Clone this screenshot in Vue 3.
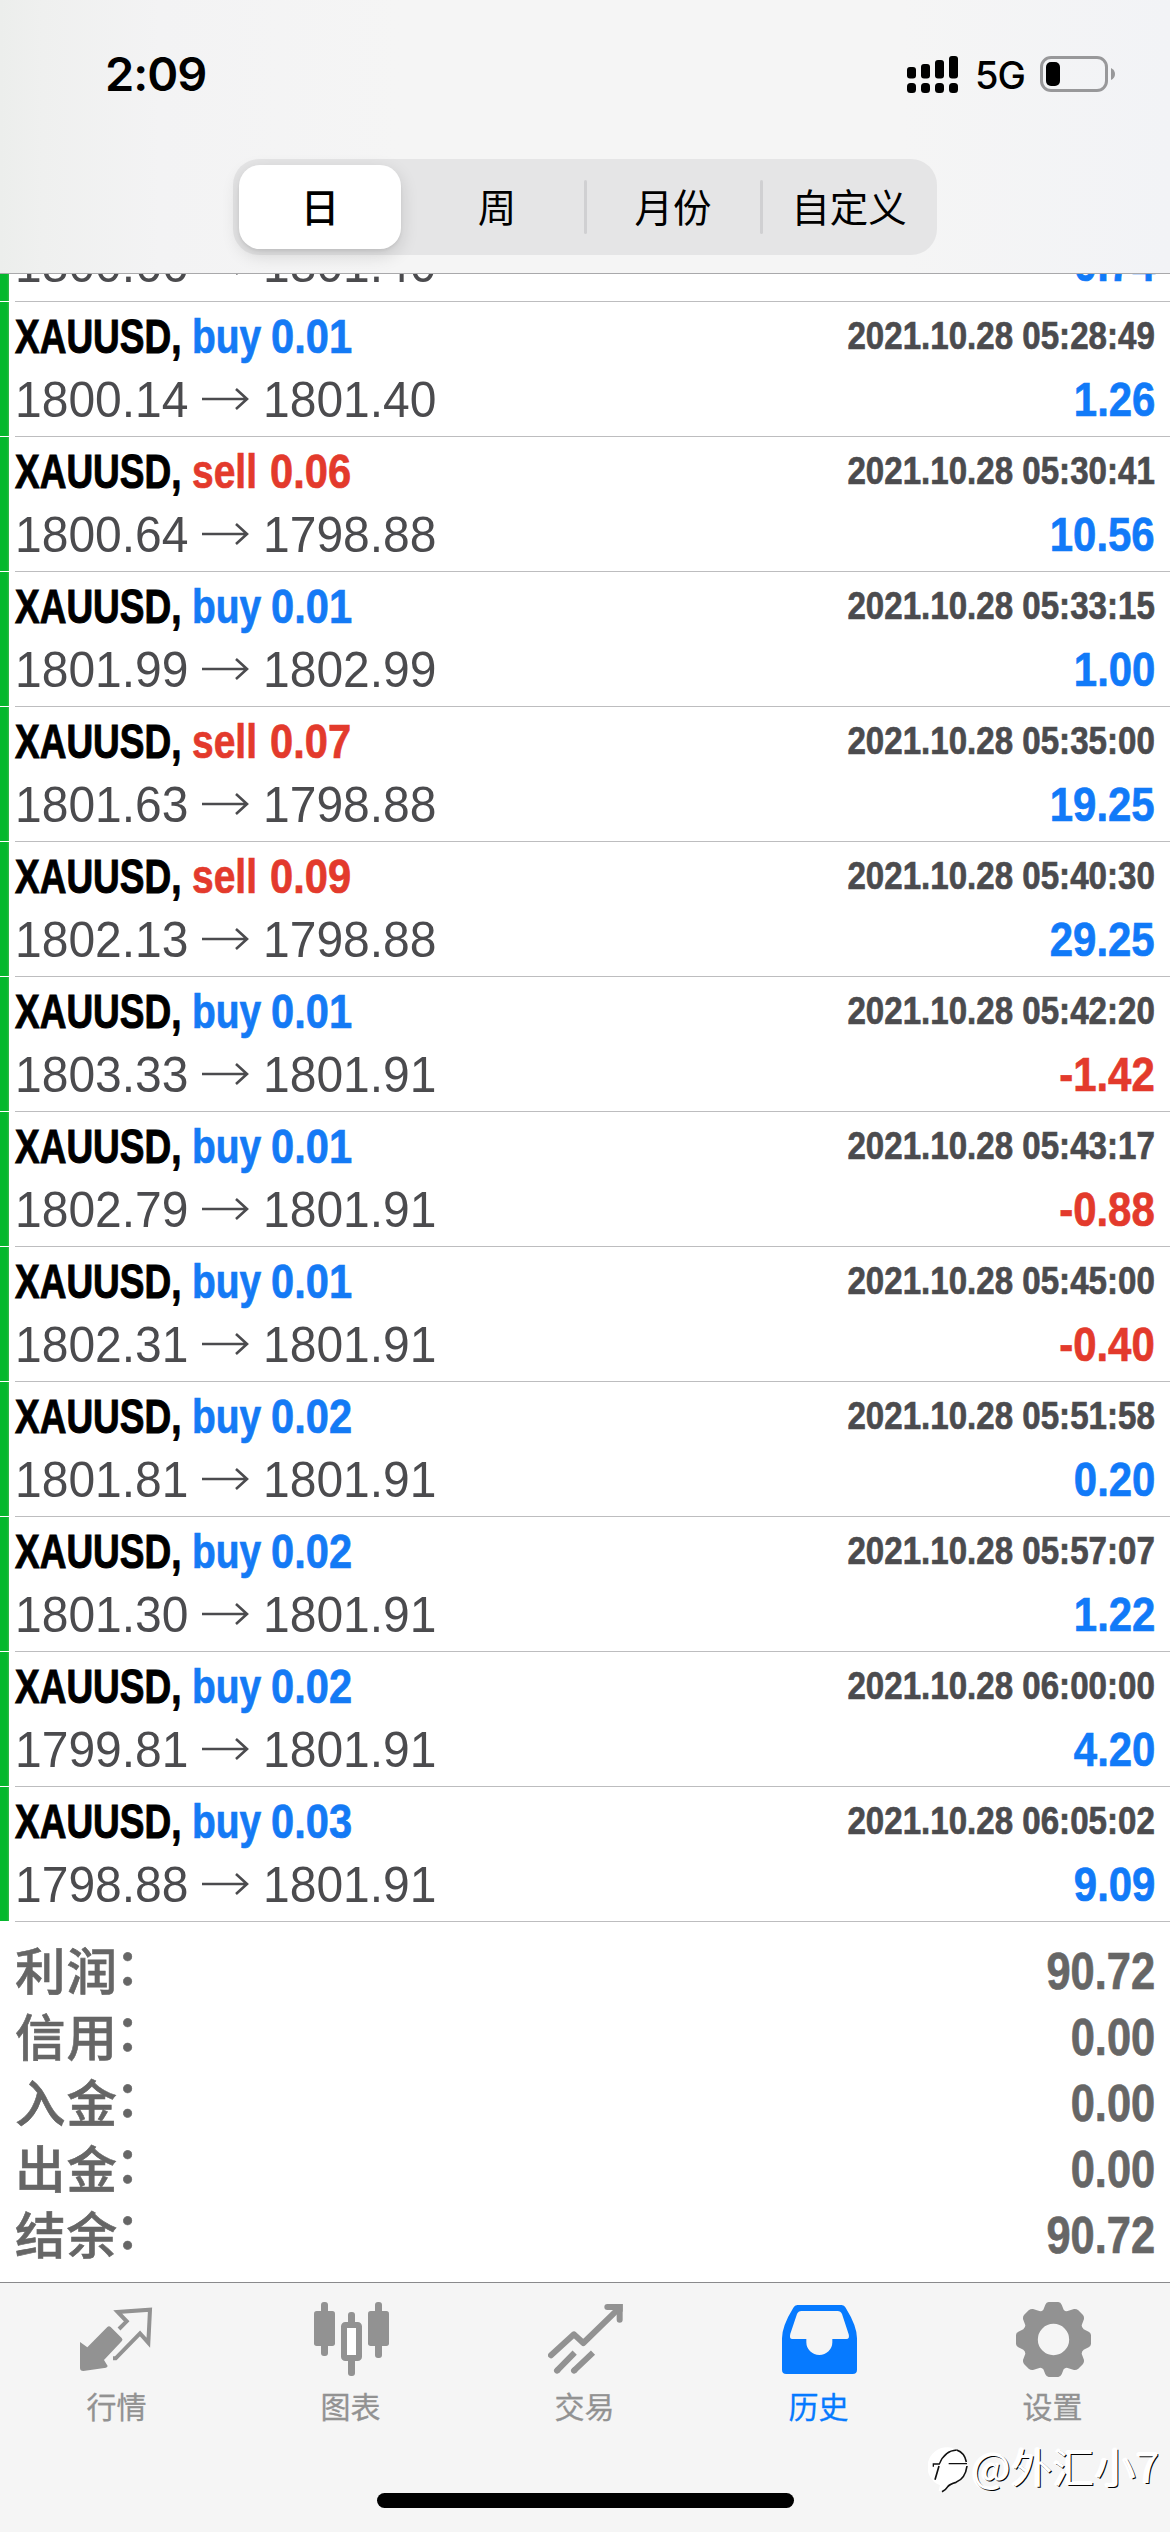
<script setup>
const deals = [
  ['buy', '0.01', '2021.10.28 05:27:15', '1800.66', '1801.40', '0.74'],
  ['buy', '0.01', '2021.10.28 05:28:49', '1800.14', '1801.40', '1.26'],
  ['sell', '0.06', '2021.10.28 05:30:41', '1800.64', '1798.88', '10.56'],
  ['buy', '0.01', '2021.10.28 05:33:15', '1801.99', '1802.99', '1.00'],
  ['sell', '0.07', '2021.10.28 05:35:00', '1801.63', '1798.88', '19.25'],
  ['sell', '0.09', '2021.10.28 05:40:30', '1802.13', '1798.88', '29.25'],
  ['buy', '0.01', '2021.10.28 05:42:20', '1803.33', '1801.91', '-1.42'],
  ['buy', '0.01', '2021.10.28 05:43:17', '1802.79', '1801.91', '-0.88'],
  ['buy', '0.01', '2021.10.28 05:45:00', '1802.31', '1801.91', '-0.40'],
  ['buy', '0.02', '2021.10.28 05:51:58', '1801.81', '1801.91', '0.20'],
  ['buy', '0.02', '2021.10.28 05:57:07', '1801.30', '1801.91', '1.22'],
  ['buy', '0.02', '2021.10.28 06:00:00', '1799.81', '1801.91', '4.20'],
  ['buy', '0.03', '2021.10.28 06:05:02', '1798.88', '1801.91', '9.09'],
].map(([side, lot, time, open, close, profit], i) => ({ side, lot, time, open, close, profit, scrolled: i === 0 }))

const totals = [
  ['利润', '90.72'],
  ['信用', '0.00'],
  ['入金', '0.00'],
  ['出金', '0.00'],
  ['结余', '90.72'],
]
const periods = ['日', '周', '月份', '自定义']
</script>

<template>
  <div class="screen">
    <header class="top">
      <div class="status">
        <span class="clock">2:09</span>
        <div class="status-right">
          <svg class="signal" width="51" height="37" viewBox="0 0 51 37">
            <rect x="0" y="11" width="9" height="11.5" rx="3" />
            <rect x="14" y="8" width="9" height="14.5" rx="3" />
            <rect x="28" y="4" width="9" height="18.5" rx="3" />
            <rect x="42" y="0" width="9" height="22.5" rx="3" />
            <rect v-for="i in 4" :key="i" :x="(i - 1) * 14" y="27" width="9" height="10" rx="3.5" />
          </svg>
          <span class="net">5G</span>
          <svg class="battery" width="76" height="36" viewBox="0 0 76 36">
            <rect x="1.5" y="1.5" width="65" height="33" rx="9.5" fill="none" stroke="#98989a" stroke-width="3" />
            <rect x="6" y="6" width="14" height="24" rx="5" />
            <path d="M71 12q4 2 4 6t-4 6z" fill="#98989a" />
          </svg>
        </div>
      </div>
      <div class="segments">
        <div v-for="(p, i) in periods" :key="p" class="segment" :class="{ on: i === 0, line: i > 1 }">
          <span>{{ p }}</span>
        </div>
      </div>
    </header>

    <main class="content">
      <div class="deals">
        <div v-for="d in deals" :key="d.time" class="deal" :class="{ scrolled: d.scrolled }">
          <div class="bar"></div>
          <div class="body">
            <div v-if="!d.scrolled" class="row title">
              <span class="cond symbol">XAUUSD,</span>
              <span class="cond side" :class="d.side">{{ d.side }}</span>
              <span class="cond lot" :class="d.side">{{ d.lot }}</span>
              <span class="cond time">{{ d.time }}</span>
            </div>
            <div class="row prices">
              <span class="price">{{ d.open }}</span>
              <svg class="arrow" width="48" height="24" viewBox="0 0 48 24">
                <path d="M1 12H46M35 2L46 12L35 22" fill="none" stroke="currentColor" stroke-width="2.600" />
              </svg>
              <span class="price">{{ d.close }}</span>
              <span class="cond profit" :class="{ loss: d.profit[0] === '-' }">{{ d.profit }}</span>
            </div>
          </div>
        </div>
      </div>
      <div class="totals">
        <div v-for="t in totals" :key="t[0]" class="total">
          <span class="label">{{ t[0] }}<span class="colon">：</span></span>
          <span class="cond amount">{{ t[1] }}</span>
        </div>
      </div>
    </main>

    <footer class="tabs">
      <nav class="tab-row">
        <div class="tab">
          <svg viewBox="0 0 225 225">
            <path d="M0 120L22 136L82 75Q87 70 92 75L125 108Q130 113 125 118L72 174L83 192Q82 196 78 197L10 207Q0 207 0 198Z" />
            <path d="M117 81L140 58L113 30L210 23L205 122L180 94L107 169H99" fill="none" stroke="currentColor" stroke-width="12" />
          </svg>
          <span>行情</span>
        </div>
        <div class="tab">
          <svg viewBox="0 0 225 225">
            <rect x="21" y="0" width="21" height="162" rx="9" />
            <rect x="0" y="27" width="63" height="105" rx="8" />
            <rect x="183" y="0" width="21" height="168" rx="9" />
            <rect x="162" y="27" width="63" height="105" rx="8" />
            <rect x="102" y="30" width="21" height="50" rx="9" />
            <rect x="102" y="165" width="21" height="57" rx="9" />
            <rect x="90" y="69" width="45" height="99" rx="4" fill="#fff" stroke="currentColor" stroke-width="18" />
          </svg>
          <span>图表</span>
        </div>
        <div class="tab">
          <svg viewBox="0 0 225 225">
            <g fill="none" stroke="currentColor" stroke-width="18" stroke-linecap="round">
              <path d="M9 160L78 97L106 123L212 20" stroke-linejoin="round" />
              <path d="M27 206L80 152M78 206L135 152" stroke-linecap="butt" />
              <path d="M27 206L28 205M78 206L79 205" />
              <path d="M178 15H215V53" />
            </g>
            <path d="M200 6H224V30Z" />
          </svg>
          <span>交易</span>
        </div>
        <div class="tab active">
          <svg viewBox="0 0 225 225">
            <path fill-rule="evenodd" d="M46 9H179Q187 9 191 17Q225 72 225 109V203Q225 216 212 216H13Q0 216 0 203V109Q0 72 34 17Q38 9 46 9ZM58 27Q49 27 45 36L25 95Q21 111 31 111H73V121A39 38 0 0 0 151 121V111H193Q204 111 200 97L180 36Q176 27 167 27Z" />
          </svg>
          <span>历史</span>
        </div>
        <div class="tab">
          <svg viewBox="0 0 225 225">
            <path fill-rule="evenodd" d="M98 0H127Q134 1 137 8L143 23Q148 29 155 27L174 21Q181 20 187 25L201 39Q205 44 204 51L197 70Q197 77 203 82L218 89Q224 92 225 99V126Q224 133 218 136L203 143Q197 148 197 155L204 174Q205 181 201 186L187 200Q181 205 174 204L155 198Q148 196 143 202L137 217Q134 224 127 225H98Q91 224 88 217L82 202Q77 196 70 198L51 204Q44 205 38 200L24 186Q20 181 21 174L28 155Q28 148 22 143L7 136Q1 133 0 126V99Q1 92 7 89L22 82Q28 77 28 70L21 51Q20 44 24 39L38 25Q44 20 51 21L70 27Q77 29 82 23L88 8Q91 1 98 0ZM112.500 65.500A47 47 0 1 0 112.500 159.500A47 47 0 1 0 112.500 65.500Z" />
          </svg>
          <span>设置</span>
        </div>
      </nav>
      <div class="home"></div>
      <div class="watermark">
        <svg width="42" height="50" viewBox="0 0 126 150">
          <path d="M58 4A59 59 0 0 1 117 62Q114 100 84 112Q62 122 44 138L32 134L36 118A59 59 0 0 1 58 4Z" fill="#fff" />
          <g fill="none" stroke="#111">
            <path d="M16 62V54H34Q50 14 86 12M62 53H117" stroke-width="4" />
            <path d="M33 60L21 101M86 12Q110 20 115 48M117 60Q112 98 84 109Q66 114 60 121Q54 131 42 137" stroke-width="5" />
          </g>
        </svg>
        <span>@外汇小7</span>
      </div>
    </footer>
  </div>
</template>

<style>
body {
  margin: 0;
  background: #fff;
}
</style>

<style scoped>
.screen {
  width: 1170px;
  height: 2532px;
  display: flex;
  flex-direction: column;
  overflow: hidden;
  position: relative;
  background: #fff;
  font-family: "Liberation Sans", "Noto Sans CJK SC", sans-serif;
  font-kerning: none;
}
.top {
  height: 273px;
  flex: none;
  border-bottom: 1px solid #a9a9ab;
  background: linear-gradient(90deg, #eceeec 0, #eff0ef 42px, #f3f3f4 160px, #f5f5f5 400px, #f5f5f5 900px, #f2f3f6 1170px);
}
.status {
  height: 159px;
  display: flex;
  justify-content: space-between;
  padding: 0 54px 0 105px;
}
.clock {
  font: 600 47px/60px Inter, sans-serif;
  letter-spacing: -1px;
  margin-top: 44px;
}
.status-right {
  display: flex;
  align-items: flex-start;
  padding-top: 56px;
}
.net {
  font: 500 38px/46px Inter, sans-serif;
  width: 65px;
  margin: -4px 0 0 17px;
  letter-spacing: -1px;
}
.segments {
  width: 704px;
  height: 96px;
  margin: 0 auto;
  display: flex;
  border-radius: 26px;
  background: #e5e5e6;
}
.segment {
  flex: 1;
  display: flex;
  align-items: center;
  justify-content: center;
  font: 400 38.5px/60px "Noto Sans CJK SC", sans-serif;
  padding-bottom: 5px;
  position: relative;
}
.segment.line::before {
  content: "";
  position: absolute;
  left: -1px;
  top: 21px;
  width: 3px;
  height: 54px;
  border-radius: 2px;
  background: #d0d0d2;
}
.segment.on {
  flex: none;
  width: 162px;
  margin: 6px 8px 6px 6px;
  border-radius: 21px;
  background: #fff;
  font-weight: 500;
  box-shadow: 0 6px 18px rgba(0, 0, 0, 0.14), 0 2px 3px rgba(0, 0, 0, 0.06);
}
.content {
  flex: 1;
  min-height: 0;
  overflow: hidden;
}
.deal {
  height: 135px;
  display: flex;
}
.deal.scrolled {
  height: 28px;
  overflow: hidden;
  align-items: flex-end;
}
.deal.scrolled .prices {
  margin-top: -39px;
}
.bar {
  width: 9px;
  height: 134px;
  background: linear-gradient(90deg, #04b82d 7px, #35ba4c);
}
.scrolled .bar {
  height: 27px;
  margin-bottom: 1px;
}
.body {
  flex: 1;
  box-sizing: border-box;
  height: 135px;
  margin-left: 6px;
  border-bottom: 1px solid #bdbdbf;
  padding-right: 15px;
  color: #4b4b4e;
}
.scrolled .body {
  height: 28px;
}
.row {
  display: flex;
  height: 63px;
  line-height: 60px;
  white-space: nowrap;
}
.title {
  padding-top: 4px;
  height: 64px;
}
.cond {
  display: block;
  font-weight: 700;
  transform-origin: 0 50%;
  -webkit-text-stroke: 0.7px currentColor;
}
.symbol {
  width: 177px;
  font-size: 49px;
  color: #000;
  transform: scaleX(0.755);
  -webkit-text-stroke-width: 1px;
}
.side {
  font-size: 49px;
  transform: scaleX(0.795);
}
.side.buy {
  width: 79px;
}
.side.sell {
  width: 78px;
}
.lot {
  font-size: 49px;
  transform: scaleX(0.85);
}
.buy {
  color: #147af5;
}
.sell {
  color: #e33a2c;
}
.time {
  margin-left: auto;
  font-size: 39.5px;
  line-height: 58px;
  transform: scaleX(0.838);
  transform-origin: 100% 50%;
}
.price {
  width: 173px;
  font-size: 50px;
  transform: scaleX(0.96);
  transform-origin: 0 50%;
}
.arrow {
  margin: 17px 14px 0 13px;
}
.profit {
  margin-left: auto;
  font-size: 49px;
  line-height: 58px;
  color: #117af8;
  transform: scaleX(0.855);
  transform-origin: 100% 50%;
}
.profit.loss {
  color: #e33a2c;
}
.totals {
  padding: 16px 15px 0;
  color: #666;
}
.total {
  height: 66px;
  display: flex;
  justify-content: space-between;
  line-height: 66px;
}
.label {
  font-family: "Noto Sans CJK SC", sans-serif;
  font-size: 50.5px;
  font-weight: 500;
  line-height: 60px;
  letter-spacing: 1px;
  -webkit-text-stroke: 0.6px currentColor;
}
.colon {
  position: relative;
  top: -5px;
  left: -3px;
}
.amount {
  font-size: 52px;
  transform: scaleX(0.835);
  transform-origin: 100% 50%;
}
.tabs {
  height: 249px;
  flex: none;
  border-top: 1px solid #8a8a8c;
  background: #f5f5f5;
  position: relative;
}
.tab-row {
  display: flex;
  padding-top: 19px;
  height: 191px;
}
.tab {
  flex: 1;
  display: flex;
  flex-direction: column;
  align-items: center;
  color: #929292;
  font: 400 30px/40px "Noto Sans CJK SC", sans-serif;
}
.tab svg {
  width: 75px;
  height: 75px;
  fill: currentColor;
}
.tab span {
  margin: 8px 1px 0 0;
  -webkit-text-stroke: 0.3px currentColor;
}
.tab.active {
  color: #067aff;
}
.home {
  width: 417px;
  height: 15px;
  margin: 0 auto;
  border-radius: 8px;
  background: #000;
}
.watermark {
  position: absolute;
  left: 928px;
  top: 163px;
  display: flex;
  color: #fff;
  font: 400 41px/50px "Noto Sans CJK SC", sans-serif;
  letter-spacing: 0.7px;
  text-shadow: 1px 1px 0 #000, -1px -1px 0 #fff, -2px 0 0 #fff;
  white-space: nowrap;
}
.watermark span {
  margin: -6px 0 0 2px;
}
</style>
